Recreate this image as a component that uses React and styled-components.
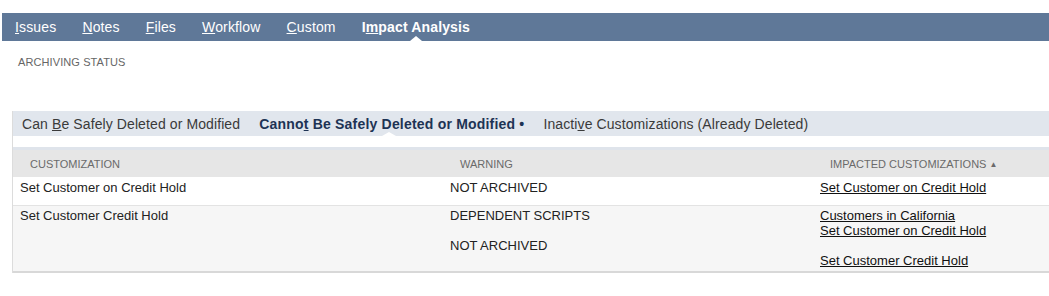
import React from 'react';
import styled, { createGlobalStyle } from 'styled-components';

const Global = createGlobalStyle`
  body {
    margin: 0;
    background: #fff;
    font-family: "Liberation Sans", Arial, sans-serif;
  }
`;

const NavBar = styled.div`
  margin-top: 13px;
  margin-left: 2px;
  height: 28px;
  background: #5f7898;
  display: flex;
  align-items: center;
  gap: 26px;
  padding-left: 13px;
`;

const NavItem = styled.div`
  position: relative;
  color: #fff;
  font-size: 14px;
  letter-spacing: 0.15px;
  font-weight: ${p => (p.$active ? 'bold' : 'normal')};
  height: 28px;
  line-height: 29px;
  cursor: pointer;
  &::after {
    content: '';
    display: ${p => (p.$active ? 'block' : 'none')};
    position: absolute;
    left: 50%;
    bottom: 0;
    margin-left: -6px;
    border-left: 6px solid transparent;
    border-right: 6px solid transparent;
    border-bottom: 5px solid #fff;
  }
`;

const SectionTitle = styled.div`
  margin: 15px 0 0 18px;
  font-size: 11px;
  color: #666;
  letter-spacing: 0.1px;
`;

const Panel = styled.div`
  margin: 43px 0 0 12px;
  border-left: 1px solid #dcdcdc;
`;

const SubTabs = styled.div`
  height: 25px;
  background: #e1e6ed;
  display: flex;
  align-items: center;
  gap: 19px;
  padding-left: 9px;
`;

const SubTab = styled.div`
  position: relative;
  font-size: 14px;
  letter-spacing: ${p => (p.$active ? '0.2px' : '0.1px')};
  height: 25px;
  line-height: 26px;
  color: ${p => (p.$active ? '#1d3354' : '#3a3a3a')};
  font-weight: ${p => (p.$active ? 'bold' : 'normal')};
  &::after {
    content: '';
    display: ${p => (p.$active ? 'block' : 'none')};
    position: absolute;
    left: 50%;
    bottom: 0;
    margin-left: -10px;
    border-left: 7px solid transparent;
    border-right: 7px solid transparent;
    border-bottom: 4px solid #fff;
  }
`;

const Table = styled.div`
  margin-top: 11px;
  border-top: 3px solid #dfe4eb;
  border-bottom: 2px solid #d8d8d8;
`;

const Row = styled.div`
  display: grid;
  grid-template-columns: 430px 370px 1fr;
  background: ${p => p.$bg || '#fff'};
  border-top: ${p => (p.$divider ? '1px solid #e3e3e3' : 'none')};
`;

const HeadCell = styled.div`
  height: 27px;
  line-height: 28px;
  padding-left: 17px;
  font-size: 11px;
  color: #6a6a6a;
  text-transform: uppercase;
  background: #e6e6e6;
`;

const Cell = styled.div`
  padding: ${p => p.$pad || '2px 0 3px 7px'};
  font-size: 13px;
  line-height: 15px;
  color: #222;
`;

const Line = styled.div`
  margin-top: ${p => p.$gap || 0}px;
`;

const Link = styled.a`
  display: block;
  color: #111;
  text-decoration: underline;
  margin-top: ${p => p.$gap || 0}px;
  cursor: pointer;
`;

const Arrow = styled.span`
  font-size: 8px;
  margin-left: 3px;
  vertical-align: 1px;
`;

export default function App() {
  return (
    <>
      <Global />
      <NavBar>
        <NavItem><u>I</u>ssues</NavItem>
        <NavItem><u>N</u>otes</NavItem>
        <NavItem><u>F</u>iles</NavItem>
        <NavItem><u>W</u>orkflow</NavItem>
        <NavItem><u>C</u>ustom</NavItem>
        <NavItem $active>I<u>m</u>pact Analysis</NavItem>
      </NavBar>
      <SectionTitle>ARCHIVING STATUS</SectionTitle>
      <Panel>
        <SubTabs>
          <SubTab>Can <u>B</u>e Safely Deleted or Modified</SubTab>
          <SubTab $active>Canno<u>t</u> Be Safely Deleted or Modified •</SubTab>
          <SubTab>Inacti<u>v</u>e Customizations (Already Deleted)</SubTab>
        </SubTabs>
        <Table>
          <Row>
            <HeadCell>Customization</HeadCell>
            <HeadCell>Warning</HeadCell>
            <HeadCell>Impacted Customizations<Arrow>▲</Arrow></HeadCell>
          </Row>
          <Row>
            <Cell $pad="3px 0 10px 7px">Set Customer on Credit Hold</Cell>
            <Cell $pad="3px 0 10px 7px">NOT ARCHIVED</Cell>
            <Cell $pad="3px 0 10px 7px"><Link>Set Customer on Credit Hold</Link></Cell>
          </Row>
          <Row $bg="#f6f6f6" $divider>
            <Cell>Set Customer Credit Hold</Cell>
            <Cell>
              <Line>DEPENDENT SCRIPTS</Line>
              <Line $gap={15}>NOT ARCHIVED</Line>
            </Cell>
            <Cell>
              <Link>Customers in California</Link>
              <Link>Set Customer on Credit Hold</Link>
              <Link $gap={15}>Set Customer Credit Hold</Link>
            </Cell>
          </Row>
        </Table>
      </Panel>
    </>
  );
}
